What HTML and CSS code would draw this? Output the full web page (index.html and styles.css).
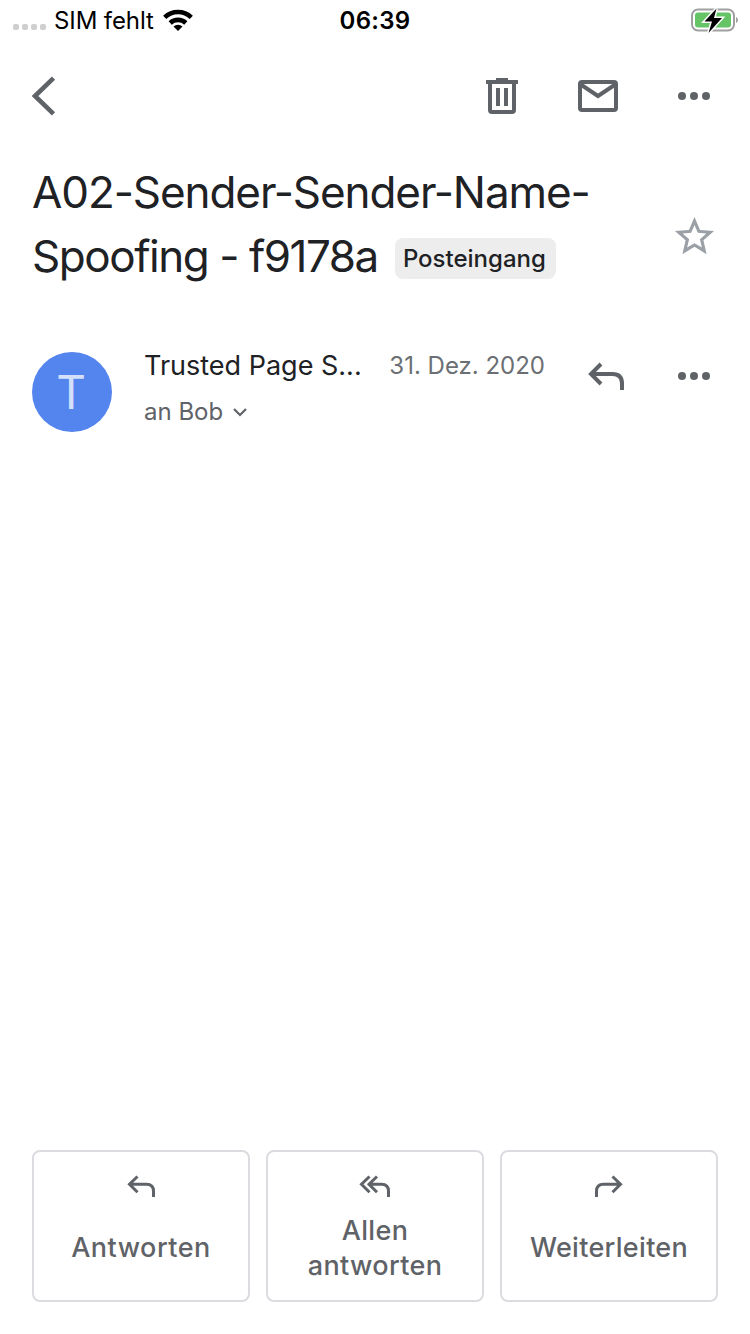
FILE: index.html
```
<!DOCTYPE html>
<html lang="de">
<head>
<meta charset="utf-8">
<title>A02-Sender-Sender-Name-Spoofing</title>
<link rel="stylesheet" href="styles.css">
</head>
<body>
<div class="screen">
  <header class="status">
    <div class="carrier">
      <svg class="signal" width="34" height="8" viewBox="0 0 34 8"><rect x="0" y="1" width="6" height="6" rx="2"/><rect x="9" y="1" width="6" height="6" rx="2"/><rect x="18" y="1" width="6" height="6" rx="2"/><rect x="27" y="1" width="6" height="6" rx="2"/></svg>
      <span class="sim">SIM fehlt</span>
      <svg class="wifi" width="30" height="22" viewBox="0 0 30 22"><path d="M15 22l-4.500-4.500a6.500 6.500 0 0 1 9 0z"/><path class="arc" d="M7.200 14a11.300 11.300 0 0 1 15.600 0M1.700 8.300a19.200 19.200 0 0 1 26.600 0"/></svg>
    </div>
    <span class="time">06:39</span>
    <svg class="battery" width="48" height="28" viewBox="0 0 48 28"><rect class="shell" x="2" y="4.500" width="42" height="21" rx="6"/><rect class="charge" x="5" y="7.500" width="36" height="15" rx="3"/><path class="nub" d="M46 12c2.600 1 2.600 5 0 6z"/><path class="bolt" d="M26.500 3.500L14.500 16.500h7.500l-3.500 11.500L32 13h-8z"/></svg>
  </header>

  <nav class="toolbar">
    <svg class="icon line back" width="48" height="48" viewBox="0 0 48 48"><path d="M29.500 6.200L11 24l18.500 17.800"/></svg>
    <div class="tools">
      <svg class="icon line" width="48" height="48" viewBox="0 0 48 48"><path d="M8 10h32M18 8h12M12 11v27q0 2 2 2h20q2 0 2-2V11M20 16v18M28 16v18"/></svg>
      <svg class="icon line" width="48" height="48" viewBox="0 0 48 48"><rect x="6" y="10" width="36" height="28" rx="2"/><path d="M6 12l18 12 18-12"/></svg>
      <svg class="icon solid" width="48" height="48" viewBox="0 0 48 48"><circle cx="12" cy="24" r="4"/><circle cx="24" cy="24" r="4"/><circle cx="36" cy="24" r="4"/></svg>
    </div>
  </nav>

  <section class="subject">
    <h1 class="title">A02-Sender-Sender-Name-<br><span class="second">Spoofing - f9178a</span><span class="label">Posteingang</span></h1>
    <svg class="star" width="47" height="47" viewBox="0 0 24 24"><path d="M22 9.240l-7.190-.620L12 2 9.190 8.630 2 9.240l5.460 4.730L5.820 21 12 17.270 18.180 21l-1.630-7.030L22 9.240zM12 15.400l-3.760 2.270 1-4.280-3.320-2.880 4.380-.380L12 6.100l1.710 4.040 4.380.380-3.320 2.880 1 4.280L12 15.400z"/></svg>
  </section>

  <section class="message">
    <div class="avatar">T</div>
    <div class="meta">
      <div class="from"><span class="sender">Trusted Page S...</span><span class="date">31. Dez. 2020</span></div>
      <div class="to"><span>an Bob</span><svg class="chevron" width="16" height="12" viewBox="0 0 16 12"><path d="M2 3l6 6 6-6"/></svg></div>
    </div>
    <div class="actions">
      <svg class="icon line" width="48" height="48" viewBox="0 0 48 48"><path d="M19 12L9 22l10 10M9 22h21.500q9.500 0 9.500 9.500v6.500"/></svg>
      <svg class="icon solid" width="48" height="48" viewBox="0 0 48 48"><circle cx="12" cy="24" r="4"/><circle cx="24" cy="24" r="4"/><circle cx="36" cy="24" r="4"/></svg>
    </div>
  </section>

  <footer class="replies">
    <div class="card">
      <svg class="icon line small" width="32" height="24" viewBox="0 0 32 24"><path d="M12.500 2.500L4.500 10.200l8 8M4.500 10.200h17q7 0 7 7v5.800"/></svg>
      <span class="caption reply">Antworten</span>
    </div>
    <div class="card">
      <svg class="icon line small" width="32" height="24" viewBox="0 0 32 24"><path d="M10.500 2.500L2.500 10.200l8 8M18 2.500L10 10.200l8 8M10 10.200h12.500q7 0 7 7v5.800"/></svg>
      <span class="caption all">Allen<br>antworten</span>
    </div>
    <div class="card">
      <svg class="icon line small" width="32" height="24" viewBox="0 0 32 24"><path d="M19.500 2.500l8 7.700-8 8M27.500 10.200h-17q-7 0-7 7v5.800"/></svg>
      <span class="caption forward">Weiterleiten</span>
    </div>
  </footer>
</div>
</body>
</html>
```
FILE: styles.css
```
* { box-sizing: border-box; }
body { margin: 0; background: #fff; }
svg { display: block; flex: none; }
.screen {
  width: 750px;
  height: 1334px;
  display: flex;
  flex-direction: column;
  font-family: Inter, "Open Sans", sans-serif;
  color: #202124;
  white-space: nowrap;
}
.status {
  height: 40px;
  display: grid;
  grid-template-columns: 1fr auto 1fr;
  align-items: center;
  padding: 0 12px 0 13px;
  color: #000;
}
.carrier { display: flex; align-items: center; }
.signal { fill: #cfcfcf; margin: 13px 7px 0 0; }
.sim { font-size: 24px; line-height: 40px; width: 110px; letter-spacing: -0.1px; padding-top: 1px; }
.wifi { margin: -2px 0 0 -1px; }
.wifi .arc { fill: none; stroke: #000; stroke-width: 4.6; }
.time { font-size: 24px; line-height: 40px; font-weight: 600; letter-spacing: 0.3px; padding: 1px 1px 0 0; }
.battery { justify-self: end; margin-top: -3px; }
.shell { fill: none; stroke: #a0a0a0; stroke-width: 2; }
.charge { fill: #65c466; }
.nub { fill: #a0a0a0; }
.bolt { stroke: #fff; stroke-width: 3; paint-order: stroke; }

.toolbar {
  height: 112px;
  display: flex;
  align-items: center;
  justify-content: space-between;
  padding: 0 32px 0 24px;
}
.tools { display: flex; gap: 48px; }
.icon.line { fill: none; stroke: #5f6368; stroke-width: 4; }
.icon.line.back { stroke-width: 4.6; }
.icon.solid { fill: #5f6368; }
.icon.line.small { stroke-width: 3; }

.subject {
  height: 168px;
  padding: 8px 32.5px 0 32px;
  display: flex;
  justify-content: space-between;
}
.title { margin: 0; font-size: 44px; line-height: 64px; font-weight: 400; letter-spacing: -1.08px; }
.second { letter-spacing: -1.45px; }
.label {
  display: inline-block;
  vertical-align: 5px;
  width: 161px;
  height: 41px;
  margin-left: 17px;
  padding-right: 2px;
  border-radius: 8px;
  background: #ededed;
  text-align: center;
  font-size: 24px;
  line-height: 41px;
  font-weight: 500;
  letter-spacing: 0;
}
.star { fill: #9aa0a6; margin: 52.5px 0 0; }

.message { display: flex; padding: 32px 32px 0; height: 140px; }
.avatar {
  width: 80px;
  height: 80px;
  border-radius: 50%;
  background: #5484ed;
  color: #d4e0fb;
  font: 46px/81px Inter, sans-serif;
  text-align: center;
  padding-right: 2px;
}
.meta { width: 401px; margin-left: 32px; }
.from { display: flex; justify-content: space-between; line-height: 28px; }
.sender { font-size: 27px; }
.date { font-size: 24px; color: #6b6f74; }
.to {
  display: flex;
  align-items: center;
  gap: 9px;
  margin-top: 16px;
  font-size: 24px;
  line-height: 32px;
  color: #5f6368;
}
.chevron { fill: none; stroke: #5f6368; stroke-width: 2.2; }
.actions { display: flex; gap: 40px; margin-left: 37px; }

.replies { display: flex; gap: 16px; margin: auto 32px 32px; }
.card {
  width: 218px;
  height: 152px;
  border: 2px solid #dadce0;
  border-radius: 8px;
  display: flex;
  flex-direction: column;
  align-items: center;
  padding-top: 22px;
  color: #5f6368;
}
.caption {
  height: 98px;
  display: flex;
  align-items: center;
  text-align: center;
  font-size: 27px;
  line-height: 35px;
  font-weight: 500;
}
.reply { letter-spacing: 0.5px; }
.all { height: 100px; letter-spacing: 0.35px; }
.forward { letter-spacing: 0.3px; }
```
